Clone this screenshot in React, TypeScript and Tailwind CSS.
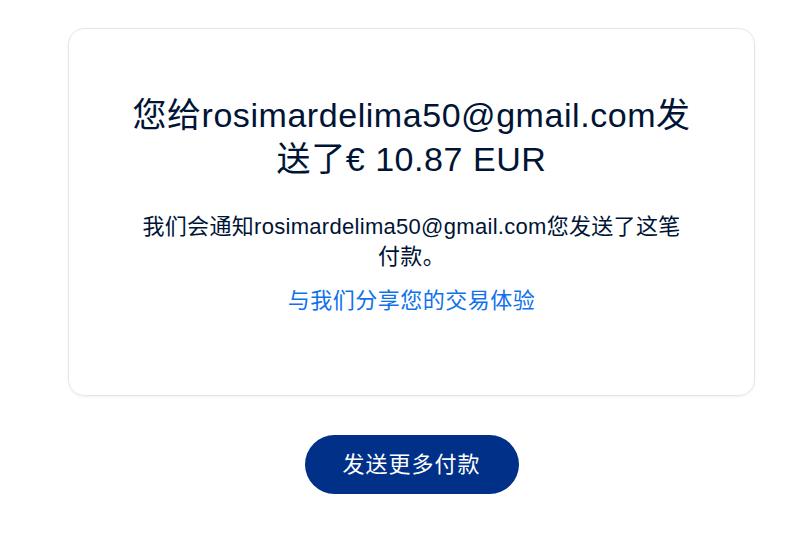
export default function App() {
  return (
    <div
      className="min-h-[533px] bg-white px-[68px] pt-[28px]"
      style={{ fontFamily: '"Liberation Sans", Arial, "Noto Sans CJK SC", sans-serif' }}
    >
      <div className="w-[687px] rounded-[16px] border border-[#e6e6e6] shadow-[0_1px_3px_rgba(0,0,0,0.06)] pt-[64px] pb-[79px] text-center">
        <h1 className="mx-auto w-[575px] text-[34px] leading-[44px] tracking-[0.55px] text-[#001435]">
          您给rosimardelima50@gmail.com发送了€ 10.87 EUR
        </h1>
        <p className="mx-auto mt-[31px] w-[550px] text-[22px] leading-[30px] tracking-[0.3px] text-[#001435]">
          我们会通知rosimardelima50@gmail.com您发送了这笔付款。
        </p>
        <a href="#" className="mt-[14px] block text-[22px] leading-[30px] tracking-[0.5px] text-[#1072eb]">
          与我们分享您的交易体验
        </a>
      </div>
      <div className="flex w-[687px] justify-center pt-[39px]">
        <button className="h-[59px] w-[214px] rounded-full bg-[#003087] text-[22px] tracking-[1px] text-white">
          发送更多付款
        </button>
      </div>
    </div>
  )
}
